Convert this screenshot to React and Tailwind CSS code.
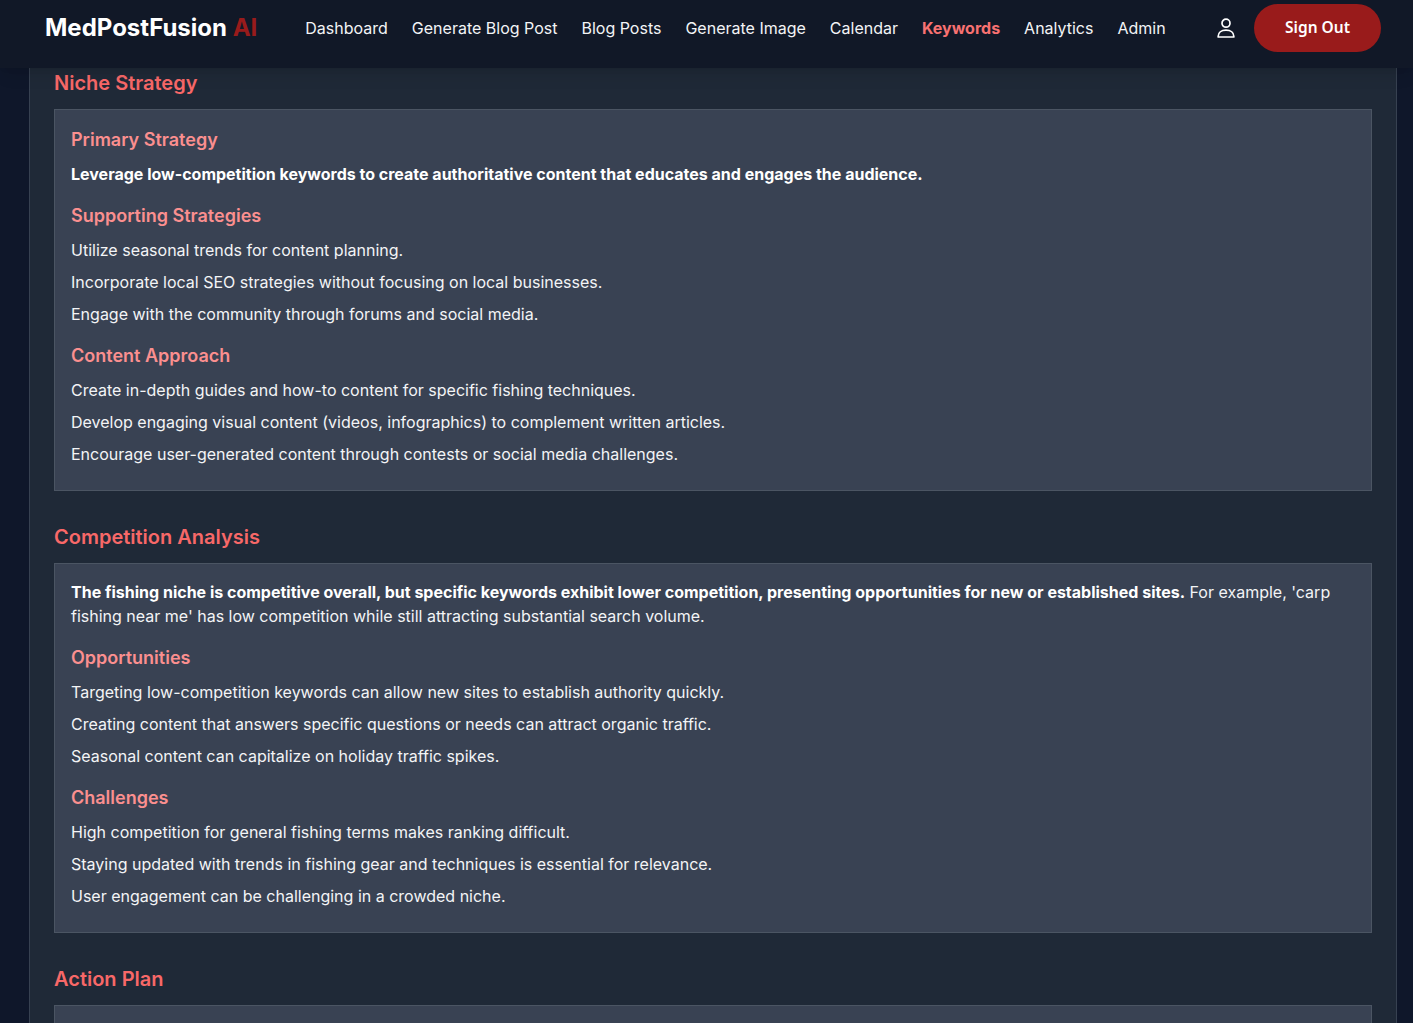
import React from 'react'

const NAV_LINKS = ['Dashboard', 'Generate Blog Post', 'Blog Posts', 'Generate Image', 'Calendar', 'Keywords', 'Analytics', 'Admin']

function Navbar() {
  return (
    <nav className="h-[68px] shrink-0 bg-[#111827] flex items-center pl-[45px] pr-8 pt-1 pb-4 shadow-lg relative z-10">
      <div className="text-2xl font-bold text-white mr-12 whitespace-nowrap">
        MedPostFusion <span className="text-[#991b1b]">AI</span>
      </div>
      <div className="flex items-center gap-6 flex-1">
        {NAV_LINKS.map(link => (
          <a key={link} className={link === 'Keywords' ? 'text-[#f87171] font-bold' : 'text-[#f3f4f6]'}>{link}</a>
        ))}
      </div>
      <svg className="w-[18px] h-5 mr-[19px] text-white" viewBox="0 0 18 20" fill="none" stroke="currentColor" strokeWidth="1.7">
        <circle cx="9" cy="5.2" r="4" />
        <path d="M1.2 19h15.6v-.8c0-3.600-3-6-7.800-6s-7.800 2.400-7.800 6z" strokeLinejoin="round" />
      </svg>
      <button className="w-[127px] h-12 rounded-full bg-[#991b1b] text-white text-[15.5px] font-semibold font-['Noto_Sans',sans-serif]">Sign Out</button>
    </nav>
  )
}

function Heading({ children }) {
  return <h3 className="text-lg font-semibold text-[#fb8f8f] mb-2 mt-4 first:mt-0">{children}</h3>
}

function Para({ children }) {
  return <p className="mb-2 text-[#f3f4f6]">{children}</p>
}

function Section({ title, children }) {
  return (
    <section className="mb-8">
      <h2 className="text-xl font-semibold text-[#f86868] mb-3">{title}</h2>
      <div className="border border-[#4b5563] bg-[#394253] p-4">{children}</div>
    </section>
  )
}

export default function App() {
  return (
    <div className="h-[1023px] overflow-hidden flex flex-col bg-[#111827] font-['Inter',sans-serif]">
      <Navbar />
      <main className="flex-1 pl-[29px] pr-4 bg-[#0f172a]">
        <div className="border-x border-[#374151] bg-[#1f2937] px-6 pt-px">
          <Section title="Niche Strategy">
            <Heading>Primary Strategy</Heading>
            <p className="mb-2 text-white font-bold">Leverage low-competition keywords to create authoritative content that educates and engages the audience.</p>
            <Heading>Supporting Strategies</Heading>
            <Para>Utilize seasonal trends for content planning.</Para>
            <Para>Incorporate local SEO strategies without focusing on local businesses.</Para>
            <Para>Engage with the community through forums and social media.</Para>
            <Heading>Content Approach</Heading>
            <Para>Create in-depth guides and how-to content for specific fishing techniques.</Para>
            <Para>Develop engaging visual content (videos, infographics) to complement written articles.</Para>
            <Para>Encourage user-generated content through contests or social media challenges.</Para>
          </Section>
          <Section title="Competition Analysis">
            <Para><strong className="text-white font-bold">The fishing niche is competitive overall, but specific keywords exhibit lower competition, presenting opportunities for new or established sites.</strong> For example, 'carp fishing near me' has low competition while still attracting substantial search volume.</Para>
            <Heading>Opportunities</Heading>
            <Para>Targeting low-competition keywords can allow new sites to establish authority quickly.</Para>
            <Para>Creating content that answers specific questions or needs can attract organic traffic.</Para>
            <Para>Seasonal content can capitalize on holiday traffic spikes.</Para>
            <Heading>Challenges</Heading>
            <Para>High competition for general fishing terms makes ranking difficult.</Para>
            <Para>Staying updated with trends in fishing gear and techniques is essential for relevance.</Para>
            <Para>User engagement can be challenging in a crowded niche.</Para>
          </Section>
          <Section title="Action Plan">
            <div className="h-24" />
          </Section>
        </div>
      </main>
    </div>
  )
}
